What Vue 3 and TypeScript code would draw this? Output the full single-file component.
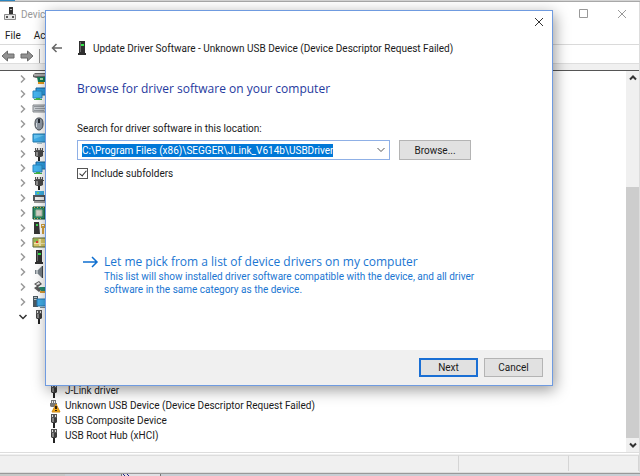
<script setup lang="ts">
import { ref } from 'vue'

type IconName =
  | 'adapter' | 'displays' | 'keyboard' | 'mouse' | 'monitor' | 'usb' | 'plug'
  | 'printer' | 'chip' | 'security' | 'sensor' | 'device' | 'speaker'
  | 'storage' | 'system' | 'warning'

interface Shape {
  d: string
  fill: string
  stroke?: string
}

const icons: Record<IconName, Shape[]> = {
  adapter: [
    { d: 'M1 3 3 1H13V6H4L1 5Z', fill: '#666' },
    { d: 'M2 2H13V4H2Z', fill: '#aaa' },
    { d: 'M5 5H13V10H6Z', fill: '#137a55' },
    { d: 'M8 6H11V8H8Z', fill: '#a9e0b0' },
    { d: 'M6 10H12V12H6Z', fill: '#e89a1c' },
  ],
  displays: [
    { d: 'M4 1H14V8H4Z', fill: '#2c9fe3', stroke: '#17659b' },
    { d: 'M1 4H10V11H1Z', fill: '#45b4ef', stroke: '#2b86c0' },
    { d: 'M4 11H8V12H10V13H2V12H4Z', fill: '#43b649' },
  ],
  keyboard: [
    { d: 'M1 3H14V10H1Z', fill: '#c9ced2', stroke: '#85898d' },
    { d: 'M2 4H12V5H2ZM3 6H13V7H3ZM2 8H12V9H2Z', fill: '#93989d' },
  ],
  mouse: [
    { d: 'M7 1C10 1 11 3 11 7S9 13 7 13 3 11 3 7 4 1 7 1Z', fill: '#929ba6', stroke: '#3d4249' },
    { d: 'M6 2H8V6H6Z', fill: '#252a33' },
    { d: 'M4 6H5V10H4Z', fill: '#d9e0e6' },
  ],
  monitor: [
    { d: 'M1 2H14V10H1Z', fill: '#41aeea', stroke: '#237aad' },
    { d: 'M2 3H13L2 7Z', fill: '#68c6f4' },
    { d: 'M5 11H10V12H5Z', fill: '#a9c3ce' },
  ],
  usb: [
    { d: 'M3 1H11V4H3Z', fill: '#555' },
    { d: 'M4 1H5V3H4ZM6 1H8V3H6ZM9 1H10V3H9Z', fill: '#ddd' },
    { d: 'M2 4H12V5H11V9L9 10H5L3 9V5H2Z', fill: '#484848' },
    { d: 'M4 5H6V9H4Z', fill: '#8c8c8c' },
    { d: 'M6 10H8V14H6Z', fill: '#222' },
  ],
  plug: [
    { d: 'M4 0H10V4H4Z', fill: '#555' },
    { d: 'M5 1H6V3H5ZM8 1H9V3H8Z', fill: '#ddd' },
    { d: 'M4 4H10V8L9 9H5L4 8Z', fill: '#3c3c3c' },
    { d: 'M5 4H7V8H5Z', fill: '#838383' },
    { d: 'M6 9H8V14H6Z', fill: '#222' },
  ],
  printer: [
    { d: 'M3 0H12V4H3Z', fill: '#3dade1' },
    { d: 'M5 1H7V3H5Z', fill: '#6ed267' },
    { d: 'M1 4H14V10H1Z', fill: '#53575c' },
    { d: 'M3 6H12V9H3Z', fill: '#eee' },
    { d: 'M2 10H13V12H2Z', fill: '#9b9b9b' },
  ],
  chip: [
    { d: 'M1 1H13V13H1Z', fill: '#2f8d67', stroke: '#0e513b' },
    { d: 'M4 4H10V10H4Z', fill: '#dad8ce', stroke: '#a8b8a4' },
    { d: 'M2 1V2H3V1ZM5 1V2H6V1ZM8 1V2H9V1ZM11 1V2H12V1ZM2 12V13H3V12ZM5 12V13H6V12ZM8 12V13H9V12Z', fill: '#cdb24e' },
  ],
  security: [
    { d: 'M2 1H7L8 13H2Z', fill: '#353535' },
    { d: 'M4 3H6V5H4Z', fill: '#3ad34a' },
    { d: 'M9 3H13V7H12V13H10V7H9Z', fill: '#d5a440' },
    { d: 'M10 4H12V5H10Z', fill: '#fff' },
  ],
  sensor: [
    { d: 'M1 2H14V11H1Z', fill: '#d9c866', stroke: '#52683a' },
    { d: 'M2 3H6V6H2Z', fill: '#88b956' },
    { d: 'M7 3H9V10H7ZM2 7H13V8H2Z', fill: '#f4e9af' },
    { d: 'M4 5H6V7H4Z', fill: '#d93c32' },
  ],
  device: [
    { d: 'M4 0H10V12H11V14H3V12H4Z', fill: '#303030' },
    { d: 'M5 1H6V11H5Z', fill: '#6a6a6a' },
    { d: 'M6 3H9V5H6Z', fill: '#35e64a' },
  ],
  speaker: [
    { d: 'M3 5H6L10 1V13L6 9H3Z', fill: '#778087' },
    { d: 'M4 5H6V9H4Z', fill: '#bbc1c5' },
    { d: 'M10 1H11V13H10Z', fill: '#3f4549' },
  ],
  storage: [
    { d: 'M2 4 7 1 10 4 6 7 10 9 7 12 2 8 5 6Z', fill: '#595959' },
    { d: 'M4 4 7 2 8 4 5 5Z', fill: '#eee' },
    { d: 'M7 7H14V11H9Z', fill: '#278a70' },
    { d: 'M8 11H13V13H8Z', fill: '#d99a36' },
  ],
  system: [
    { d: 'M1 1H6V12H1Z', fill: '#4b5860' },
    { d: 'M2 2H5V3H2ZM2 4H5V5H2Z', fill: '#b8c7ce' },
    { d: 'M5 4H14V11H5Z', fill: '#42aeea', stroke: '#2377b1' },
    { d: 'M8 12H13V13H8Z', fill: '#7c8d96' },
  ],
  warning: [
    { d: 'M4 1H9V4H10V8H4L3 7V4H4Z', fill: '#777' },
    { d: 'M5 2H6V4H5ZM7 2H8V4H7Z', fill: '#eee' },
    { d: 'M9 5 13 13H5Z', fill: '#f0a818', stroke: '#d08a14' },
    { d: 'M8 7H10V10H8ZM8 11H10V12H8Z', fill: '#33220a' },
  ],
}

const categories: IconName[] = [
  'adapter', 'displays', 'keyboard', 'mouse', 'monitor', 'usb', 'displays', 'usb', 'printer',
  'chip', 'security', 'sensor', 'device', 'speaker', 'storage', 'system', 'plug',
]

const devices: { icon: IconName; name: string }[] = [
  { icon: 'plug', name: 'J-Link driver' },
  { icon: 'warning', name: 'Unknown USB Device (Device Descriptor Request Failed)' },
  { icon: 'plug', name: 'USB Composite Device' },
  { icon: 'plug', name: 'USB Root Hub (xHCI)' },
]

const location = ref('C:\\Program Files (x86)\\SEGGER\\JLink_V614b\\USBDriver')
const includeSubfolders = ref(true)
</script>

<template>
  <div class="desktop">
    <div class="strip-top"><span class="strip-accent"></span></div>
    <main class="window">
      <header class="titlebar">
        <svg class="app-icon" viewBox="0 0 14 16">
          <path d="M6 1H10V9H6Z" fill="#333" />
          <path d="M7 3H9V4H7Z" fill="#bbb" />
          <path d="M1.500 8.500H12.500V13.500H1.500Z" fill="#e8e8e8" stroke="#8a8a8a" />
          <path d="M3 10H5V12H3ZM9 10H11V12H9Z" fill="#555" />
        </svg>
        <span class="app-title">Device</span>
        <button class="glyph-button maximize" type="button">
          <svg viewBox="0 0 10 10"><path d="M0.500 0.500H8.500V8.500H0.500Z" /></svg>
        </button>
        <button class="glyph-button" type="button">
          <svg viewBox="0 0 10 10"><path d="M1 1 9 9M9 1 1 9" /></svg>
        </button>
      </header>
      <nav class="menubar">
        <button type="button">File</button>
        <button type="button">Action</button>
      </nav>
      <div class="toolbar">
        <button type="button">
          <svg viewBox="0 0 14 12"><path d="M1 6 6.500 1V4H13V8H6.500V11Z" /></svg>
        </button>
        <button type="button">
          <svg viewBox="0 0 14 12"><path d="M13 6 7.500 1V4H1V8H7.500V11Z" /></svg>
        </button>
        <span class="divider"></span>
      </div>
      <div class="content">
        <ul class="tree">
          <li v-for="(icon, i) in categories" :key="i" class="category">
            <svg class="chevron" :class="{ open: i === categories.length - 1 }" viewBox="0 0 10 10">
              <path d="M3 1.500 6.500 5 3 8.500" />
            </svg>
            <svg class="icon" viewBox="0 0 14 14">
              <path v-for="(s, k) in icons[icon]" :key="k" :d="s.d" :fill="s.fill" :stroke="s.stroke" />
            </svg>
          </li>
          <li class="branch">
            <ul class="devices">
              <li v-for="device in devices" :key="device.name" class="device">
                <svg class="icon" viewBox="0 0 14 14">
                  <path v-for="(s, k) in icons[device.icon]" :key="k" :d="s.d" :fill="s.fill" :stroke="s.stroke" />
                </svg>
                <span>{{ device.name }}</span>
              </li>
            </ul>
          </li>
        </ul>
        <div class="scrollbar">
          <svg viewBox="0 0 10 10"><path d="M2 6.500 5 3.500 8 6.500" /></svg>
          <div class="track"><div class="thumb"></div></div>
          <svg viewBox="0 0 10 10"><path d="M2 3.500 5 6.500 8 3.500" /></svg>
        </div>
      </div>
      <footer class="statusbar"><span></span><span></span><span></span></footer>
    </main>
    <div class="strip-bottom">
      <span></span>
      <span></span>
      <span class="mark"><svg viewBox="0 0 8 2"><path d="M1 0 3 2M5 0 7 2" /></svg></span>
      <span></span>
    </div>

    <section class="dialog" role="dialog">
      <div class="dialog-top">
        <button class="glyph-button dark" type="button">
          <svg viewBox="0 0 10 10"><path d="M1 1 9 9M9 1 1 9" /></svg>
        </button>
      </div>
      <header class="dialog-header">
        <button class="back" type="button">
          <svg viewBox="0 0 12 12"><path d="M11 6H1.500M5.500 2 1.500 6 5.500 10" /></svg>
        </button>
        <svg class="icon" viewBox="0 0 14 14">
          <path v-for="(s, k) in icons.device" :key="k" :d="s.d" :fill="s.fill" />
        </svg>
        <span>Update Driver Software - Unknown USB Device (Device Descriptor Request Failed)</span>
      </header>
      <form class="dialog-body" @submit.prevent>
        <h1>Browse for driver software on your computer</h1>
        <label class="field-label" for="location">Search for driver software in this location:</label>
        <div class="field-row">
          <div class="combo">
            <div class="selected"><input id="location" v-model="location" type="text" spellcheck="false" /></div>
            <svg viewBox="0 0 10 10"><path d="M1.500 3 5 6.500 8.500 3" /></svg>
          </div>
          <button class="button browse" type="button">Browse...</button>
        </div>
        <label class="check">
          <input v-model="includeSubfolders" type="checkbox" />
          <span>Include subfolders</span>
        </label>
        <a class="command" href="#">
          <svg viewBox="0 0 16 12"><path d="M0 6H14M9 1 14 6 9 11" /></svg>
          <span class="command-text">
            <span class="command-title">Let me pick from a list of device drivers on my computer</span>
            <span class="command-note">This list will show installed driver software compatible with the device, and all driver software in the same category as the device.</span>
          </span>
        </a>
      </form>
      <footer class="dialog-footer">
        <button class="button primary" type="button">Next</button>
        <button class="button" type="button">Cancel</button>
      </footer>
    </section>
  </div>
</template>

<style>
body {
  margin: 0;
}
</style>

<style scoped>
.desktop {
  position: relative;
  display: flex;
  flex-direction: column;
  min-height: 100vh;
  overflow: hidden;
  background: #fff;
  color: #1a1a1a;
  font: 10px/15px Roboto, "Open Sans", sans-serif;
}
.desktop * {
  box-sizing: border-box;
}
button {
  padding: 0;
  border: 0;
  background: none;
  color: inherit;
  font: inherit;
}
svg {
  display: block;
  flex: none;
}
.strip-top {
  height: 2px;
  background: #d4d4d4;
  border-bottom: 1px solid #a8a8a8;
}
.strip-accent {
  display: block;
  width: 15px;
  height: 1px;
  background: #2a85c0;
}
.window {
  flex: 1;
  display: flex;
  flex-direction: column;
  border-right: 1px solid #ddd;
}
.titlebar {
  display: flex;
  align-items: center;
  height: 24px;
  padding: 0 12px 0 3px;
  color: #999;
}
.app-icon {
  width: 14px;
  height: 16px;
}
.app-title {
  flex: 1;
  padding-left: 4px;
}
.glyph-button {
  width: 10px;
  height: 10px;
}
.glyph-button svg {
  width: 10px;
  height: 10px;
  fill: none;
  stroke: #999;
}
.glyph-button.dark svg {
  stroke: #333;
}
.maximize {
  margin-right: 28px;
}
.menubar {
  display: flex;
  gap: 13px;
  height: 19px;
  padding: 0 5px;
  border-bottom: 1px solid #dadada;
}
.toolbar {
  display: flex;
  align-items: center;
  gap: 5px;
  height: 26px;
  padding: 0 0 4px 1px;
  border-bottom: 1px solid #555;
  background: linear-gradient(#fff 18px, #dedede 18px, #dedede 19px, #f0f0f0 19px);
}
.toolbar svg {
  width: 14px;
  height: 12px;
  fill: #929292;
  stroke: #6a6a6a;
}
.divider {
  width: 1px;
  height: 14px;
  background: #999;
}
.content {
  flex: 1;
  display: flex;
  border-bottom: 1px solid #ddd;
}
.tree {
  flex: 1;
  display: grid;
  grid-template-rows: repeat(25, 1fr);
  margin: 0;
  padding: 1px 0 9px;
  line-height: 14px;
  list-style: none;
}
.category,
.device {
  display: flex;
  align-items: center;
  gap: 4px;
  min-height: 0;
}
.category {
  padding-left: 18px;
}
.device {
  padding-left: 47px;
}
.branch {
  grid-row: 22 / 26;
  display: grid;
  min-height: 0;
}
.devices {
  display: grid;
  grid-template-rows: repeat(4, 1fr);
  min-height: 0;
  margin: 0;
  padding: 0;
  list-style: none;
}
.chevron {
  width: 10px;
  height: 10px;
  fill: none;
  stroke: #9a9a9a;
  stroke-width: 1.5px;
}
.open {
  transform: rotate(90deg);
  stroke: #333;
}
.icon {
  width: 14px;
  height: 14px;
}
.scrollbar {
  display: flex;
  flex-direction: column;
  align-items: center;
  width: 13px;
  background: #f0f0f0;
}
.scrollbar svg {
  width: 10px;
  height: 14px;
  fill: none;
  stroke: #333;
  stroke-width: 2px;
}
.track {
  flex: 1;
  display: flex;
  align-items: flex-end;
  align-self: stretch;
}
.thumb {
  width: 100%;
  height: 71%;
  background: #cdcdcd;
}
.statusbar {
  display: grid;
  grid-template-columns: 459px 110px 1fr;
  height: 20px;
  padding: 1px 0;
  background: #f0f0f0;
  border-top: 1px solid #fff;
  border-bottom: 1px solid #ddd;
}
.statusbar span {
  border-top: 1px solid #ddd;
  border-right: 1px solid #d5d5d5;
}
.strip-bottom {
  display: grid;
  grid-template-columns: 65px 56px 40px 1fr;
  height: 3px;
  border-top: 1px solid #999;
  background: #c8ced4;
}
.strip-bottom span:first-child {
  background: #c5c8c7;
}
.mark {
  border: solid #777;
  border-width: 0 1px;
  background: #e0e0e4;
}
.mark svg {
  width: 8px;
  height: 2px;
  fill: none;
  stroke: #22228a;
}
.dialog {
  position: absolute;
  top: 10px;
  left: 45px;
  right: 87px;
  border: 1px solid #6f9be0;
  background: #fff;
  box-shadow: 2px 4px 14px rgba(0, 0, 0, 0.4);
}
.dialog-top {
  display: flex;
  justify-content: flex-end;
  padding: 6px 8px 0;
}
.dialog-header {
  display: flex;
  align-items: center;
  height: 18px;
  margin-top: 12px;
  padding-left: 5px;
}
.back svg {
  width: 12px;
  height: 12px;
  fill: none;
  stroke: #666;
  stroke-width: 1.5px;
}
.dialog-header .icon {
  margin: 0 4px 0 12px;
}
.dialog-body {
  padding: 22px 70px 54px 31px;
}
h1 {
  margin: 0;
  color: #1f3a9e;
  font-family: "Open Sans", sans-serif;
  font-size: 12px;
  font-weight: 400;
  line-height: 20px;
}
.field-label {
  display: block;
  margin: 22px 0 4px;
}
.field-row {
  display: flex;
  align-items: center;
  gap: 9px;
  padding-right: 11px;
}
.combo {
  flex: 1;
  display: flex;
  align-items: center;
  justify-content: space-between;
  height: 20px;
  padding: 0 3px 0 4px;
  border: 1px solid #8fb0e6;
}
.combo svg {
  width: 10px;
  height: 10px;
  fill: none;
  stroke: #555;
}
.selected {
  display: flex;
}
.selected input {
  field-sizing: content;
  height: 13px;
  padding: 0;
  border: 0;
  background: #0078d7;
  color: #fff;
  font: inherit;
  line-height: 13px;
  outline: none;
}
.button {
  width: 59px;
  height: 19px;
  border: 1px solid #b4b4b4;
  background: #e1e1e1;
}
.browse {
  width: 72px;
  height: 20px;
}
.primary {
  border: 2px solid #1a6fd4;
}
.check {
  display: flex;
  align-items: center;
  gap: 3px;
  margin-top: 6px;
}
.check input {
  appearance: none;
  width: 11px;
  height: 11px;
  margin: 0;
  border: 1px solid #555;
  background: #fff;
}
.check input:checked::before {
  content: "";
  display: block;
  width: 3px;
  height: 6px;
  margin: 0 0 0 3px;
  border: solid #333;
  border-width: 0 1px 1px 0;
  transform: rotate(40deg);
}
.command {
  display: flex;
  gap: 5px;
  margin-top: 72px;
  padding-left: 6px;
  color: #1a76d2;
  text-decoration: none;
}
.command svg {
  width: 16px;
  height: 12px;
  margin-top: 3px;
  fill: none;
  stroke: #0f6fd0;
  stroke-width: 1.5px;
}
.command-text {
  display: flex;
  flex-direction: column;
}
.command-title {
  font-family: "Open Sans", sans-serif;
  font-size: 12px;
  line-height: 17px;
}
.command-note {
  line-height: 13px;
}
.dialog-footer {
  display: flex;
  justify-content: flex-end;
  gap: 6px;
  padding: 8px 9px;
  background: #f0f0f0;
}
</style>
